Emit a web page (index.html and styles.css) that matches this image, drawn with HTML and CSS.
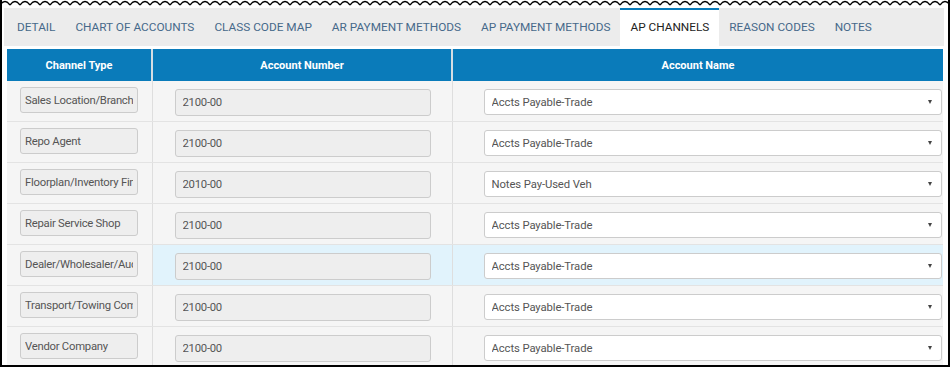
FILE: index.html
```html
<!DOCTYPE html>
<html>
<head>
    <title>AP Channels</title>
    <link rel="stylesheet" href="styles.css">
</head>
<body>
    <div class="frame">
        <svg class="torn" width="950" height="7" viewBox="0 0 950 7">
            <defs>
                <pattern id="wave" width="10" height="7" patternUnits="userSpaceOnUse">
                    <path d="M0 0 H10 V5 Q5 -2 0 5 Z" fill="#fff"/>
                    <path d="M0 5 Q5 -2 10 5" fill="none" stroke="#000" stroke-width="1.3"/>
                </pattern>
            </defs>
            <rect x="0" y="0" width="950" height="7" fill="url(#wave)"/>
        </svg>
        <div class="panel">
            <ul class="tabs">
                <li>DETAIL</li>
                <li>CHART OF ACCOUNTS</li>
                <li>CLASS CODE MAP</li>
                <li>AR PAYMENT METHODS</li>
                <li>AP PAYMENT METHODS</li>
                <li class="active">AP CHANNELS</li>
                <li>REASON CODES</li>
                <li>NOTES</li>
            </ul>
            <table class="grid">
                <colgroup>
                    <col class="col-type">
                    <col class="col-num">
                    <col class="col-name">
                </colgroup>
                <thead>
                    <tr><th>Channel Type</th><th>Account Number</th><th>Account Name</th></tr>
                </thead>
                <tbody>
                    <tr>
                        <td><input class="field short" value="Sales Location/Branch" readonly></td>
                        <td><input class="field long" value="2100-00" readonly></td>
                        <td><span class="pick"><select><option>Accts Payable-Trade</option></select></span></td>
                    </tr>
                    <tr>
                        <td><input class="field short" value="Repo Agent" readonly></td>
                        <td><input class="field long" value="2100-00" readonly></td>
                        <td><span class="pick"><select><option>Accts Payable-Trade</option></select></span></td>
                    </tr>
                    <tr>
                        <td><input class="field short" value="Floorplan/Inventory Finance" readonly></td>
                        <td><input class="field long" value="2010-00" readonly></td>
                        <td><span class="pick"><select><option>Notes Pay-Used Veh</option></select></span></td>
                    </tr>
                    <tr>
                        <td><input class="field short" value="Repair Service Shop" readonly></td>
                        <td><input class="field long" value="2100-00" readonly></td>
                        <td><span class="pick"><select><option>Accts Payable-Trade</option></select></span></td>
                    </tr>
                    <tr class="hover">
                        <td><input class="field short" value="Dealer/Wholesaler/Auction" readonly></td>
                        <td class="hl"><input class="field long" value="2100-00" readonly></td>
                        <td class="hl"><span class="pick"><select><option>Accts Payable-Trade</option></select></span></td>
                    </tr>
                    <tr>
                        <td><input class="field short" value="Transport/Towing Company" readonly></td>
                        <td><input class="field long" value="2100-00" readonly></td>
                        <td><span class="pick"><select><option>Accts Payable-Trade</option></select></span></td>
                    </tr>
                    <tr>
                        <td><input class="field short" value="Vendor Company" readonly></td>
                        <td><input class="field long" value="2100-00" readonly></td>
                        <td><span class="pick"><select><option>Accts Payable-Trade</option></select></span></td>
                    </tr>
                </tbody>
            </table>
        </div>
    </div>
</body>
</html>
```

FILE: styles.css
```css
body{
    margin: 0;
    background: #fff;
    font-family: Roboto, "Liberation Sans", Arial, sans-serif;
}
.frame{
    width: 950px;
    height: 367px;
    box-sizing: border-box;
    border: 2px solid #000;
    border-top: 0;
    overflow: hidden;
    background: #fff;
}
.torn{
    display: block;
    margin: 0 -2px;
}
.panel{
    padding: 1px 2px 0 2px;
}
.tabs{
    list-style: none;
    margin: 0 2px 0 0;
    padding: 0 0 0 3px;
    display: flex;
    height: 38px;
    background: #ececec;
}
.tabs li{
    padding: 0 10px;
    display: flex;
    align-items: center;
    font-size: 11.8px;
    color: #46698a;
    white-space: nowrap;
}
.tabs li.active{
    background: #fff;
    color: #222;
    border-top: 2px solid #0a7bba;
    padding-bottom: 2px;
}
.grid{
    margin: 3px 0 0 3px;
    width: 936px;
    border-collapse: collapse;
    table-layout: fixed;
}
.col-type{ width: 145px; }
.col-num{ width: 300px; }
.grid th{
    height: 32px;
    padding: 0;
    background: #0a7bba;
    color: #fff;
    font-size: 11px;
    font-weight: bold;
    text-align: center;
    border-right: 2px solid #d6dde3;
}
.grid th:last-child,
.grid td:last-child{
    border-right: 0;
}
.grid td{
    height: 40px;
    padding: 0;
    vertical-align: top;
    background: #f5f5f5;
    border-right: 1px solid #dedede;
    border-bottom: 1px solid #e3e3e3;
}
.grid td.hl{
    background: #e1f3fc;
}
.field{
    display: block;
    box-sizing: border-box;
    height: 26px;
    padding: 0 4px;
    font-family: Roboto, "Liberation Sans", Arial, sans-serif;
    font-size: 11.3px;
    letter-spacing: -0.25px;
    color: #555;
    background: #eee;
    border: 1px solid #ccc;
    border-radius: 3px;
    outline: none;
}
.field.short{
    width: 118px;
    margin: 6px 0 0 13px;
}
.field.long{
    width: 256px;
    height: 27px;
    margin: 8px 0 0 22px;
    padding: 0 7px;
}
.pick{
    position: relative;
    display: block;
    width: 458px;
    margin: 8px 0 0 31px;
}
.pick select{
    -webkit-appearance: none;
    appearance: none;
    display: block;
    box-sizing: border-box;
    width: 100%;
    height: 26px;
    padding: 0 7px;
    font-family: Roboto, "Liberation Sans", Arial, sans-serif;
    font-size: 11.3px;
    letter-spacing: -0.1px;
    color: #555;
    background: #fff;
    border: 1px solid #ccc;
    border-radius: 3px;
}
.pick:after{
    content: "";
    position: absolute;
    right: 10px;
    top: 11px;
    border-left: 2.5px solid transparent;
    border-right: 2.5px solid transparent;
    border-top: 4px solid #444;
}
```
